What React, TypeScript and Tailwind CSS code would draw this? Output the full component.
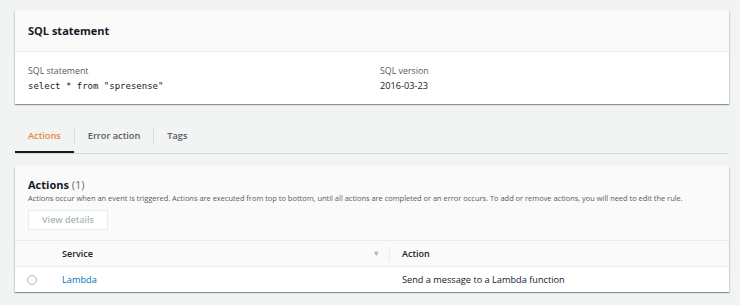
const font = { fontFamily: '"Open Sans", "Noto Sans", sans-serif' };

const cardShadow =
  "shadow-[0_1px_1px_rgba(0,28,36,0.3),1px_1px_1px_rgba(0,28,36,0.1),-1px_1px_1px_rgba(0,28,36,0.1)]";

const Tab = ({ label, active }: { label: string; active?: boolean }) => (
  <div
    className={
      "px-[13px] h-full flex items-center text-[9.2px] font-semibold " +
      (active
        ? "text-[#e8873f] border-b-2 border-[#16191f] pt-[2px]"
        : "text-[#545b64]")
    }
  >
    {label}
  </div>
);

export default function App() {
  return (
    <div className="w-[740px] h-[305px] bg-[#f2f3f3] pt-[11px] px-[15px] text-[#16191f]" style={font}>
      {/* SQL statement card */}
      <div className={"w-[714px] bg-white " + cardShadow}>
        <div className="h-[41px] bg-[#fafafa] border-b border-[#eaeded] flex items-center px-[13px]">
          <h2 className="text-[11px] font-bold pt-[1px]">SQL statement</h2>
        </div>
        <div className="grid grid-cols-2 px-[13px] pt-[12px] h-[52px]">
          <div>
            <div className="text-[8.8px] text-[#545b64] leading-[14px]">SQL statement</div>
            <div className="text-[9px] leading-[16px]" style={{ fontFamily: '"DejaVu Sans Mono", monospace' }}>
              select * from "spresense"
            </div>
          </div>
          <div className="pl-[8px]">
            <div className="text-[8.8px] text-[#545b64] leading-[14px]">SQL version</div>
            <div className="text-[9.2px] leading-[16px]">2016-03-23</div>
          </div>
        </div>
      </div>

      {/* tabs */}
      <div className="mt-[15px] w-[714px] flex items-center border-b border-[#d5dbdb] h-[35px]">
        <Tab label="Actions" active />
        <div className="w-px h-[14px] bg-[#d5dbdb]" />
        <Tab label="Error action" />
        <div className="w-px h-[14px] bg-[#d5dbdb]" />
        <Tab label="Tags" />
      </div>

      {/* actions card */}
      <div className={"mt-[12px] w-[714px] bg-white " + cardShadow}>
        <div className="bg-[#fafafa] px-[13px] pt-[11px] pb-[10px] border-b border-[#eaeded]">
          <h2 className="text-[11px] font-bold leading-[15px]">
            Actions <span className="font-normal text-[#687078]">(1)</span>
          </h2>
          <p className="text-[7.45px] text-[#545b64] leading-[12px]">
            Actions occur when an event is triggered. Actions are executed from top to bottom, until all actions are completed or an error occurs. To add or remove actions, you will need to edit the rule.
          </p>
          <button className="mt-[6px] w-[80px] h-[20px] border border-[#eaeded] bg-white text-[9px] font-semibold text-[#aab7b8]">
            View details
          </button>
        </div>
        <div className="flex items-center h-[26px] bg-[#fafafa] border-b border-[#eaeded] text-[9px] font-semibold">
          <div className="w-[47px]" />
          <div className="w-[327px] flex items-center justify-between pr-[9px]">
            <span>Service</span>
            <span className="text-[#aab7b8] text-[7.5px]">▼</span>
          </div>
          <div className="w-px h-[14px] bg-[#eaeded]" />
          <div className="pl-[12px]">Action</div>
        </div>
        <div className="flex items-center h-[25px] text-[9.2px]">
          <div className="w-[47px] pl-[12px]">
            <div className="w-[10px] h-[10px] rounded-full border border-[#aab7b8]" />
          </div>
          <div className="w-[328px] text-[#0073bb]">Lambda</div>
          <div className="pl-[12px]">Send a message to a Lambda function</div>
        </div>
      </div>
    </div>
  );
}
